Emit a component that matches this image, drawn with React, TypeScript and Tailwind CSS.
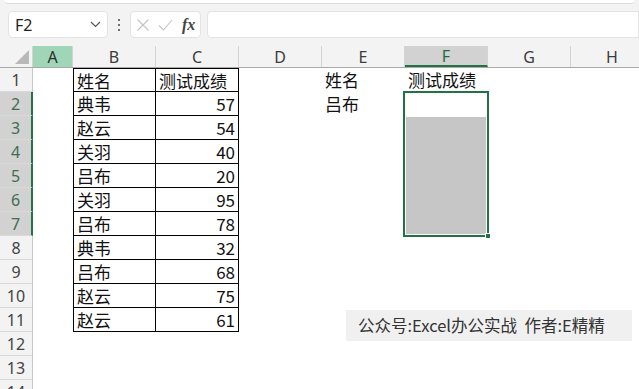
import React from 'react';

const COLS = ['A', 'B', 'C', 'D', 'E', 'F', 'G', 'H'];
const WIDTHS = [40, 83, 83, 83, 83, 83, 83, 83];

const data: [string, number][] = [
  ['典韦', 57],
  ['赵云', 54],
  ['关羽', 40],
  ['吕布', 20],
  ['关羽', 95],
  ['吕布', 78],
  ['典韦', 32],
  ['吕布', 68],
  ['赵云', 75],
  ['赵云', 61],
];

const cjk = { fontFamily: '"Noto Sans CJK SC", "Noto Sans", sans-serif' };

function Toolbar() {
  return (
    <div className="h-[46px] bg-[#f3f3f3] relative">
      <div className="h-[4px] bg-white border-b border-[#dcdcdc] rounded-b-[6px] mx-[4px]" />
      <div className="flex items-center h-[27px] mt-[7px] pl-[8px]">
        <div className="w-[100px] h-[27px] bg-white border border-[#e3e3e3] rounded-[4px] flex items-center justify-between pl-[6px] pr-[6px]">
          <span className="text-[16px] text-[#222]" style={{ fontFamily: '"Noto Sans", sans-serif' }}>F2</span>
          <svg width="11" height="7" viewBox="0 0 11 7" fill="none" stroke="#555" strokeWidth="1.2">
            <path d="M1 1l4.5 4.5L10 1" />
          </svg>
        </div>
        <div className="w-[22px] flex flex-col items-center gap-[3px]">
          <span className="w-[2px] h-[2px] bg-[#444] rounded-full" />
          <span className="w-[2px] h-[2px] bg-[#444] rounded-full" />
          <span className="w-[2px] h-[2px] bg-[#444] rounded-full" />
        </div>
        <div className="w-[71px] h-[27px] bg-white border border-[#e3e3e3] rounded-[4px] flex items-center pl-[5px] gap-[8px]">
          <svg width="14" height="14" viewBox="0 0 14 14" stroke="#c4c4c4" strokeWidth="1.1" fill="none">
            <path d="M1.5 1.5l11 11M12.5 1.5l-11 11" />
          </svg>
          <svg width="15" height="12" viewBox="0 0 15 12" stroke="#c4c4c4" strokeWidth="1.1" fill="none">
            <path d="M1 6.5l4.5 4.5L14 1" />
          </svg>
          <span className="italic text-[16px] text-[#444] font-semibold ml-[1px]" style={{ fontFamily: '"Liberation Serif", serif' }}>fx</span>
        </div>
        <div className="flex-1 h-[27px] bg-white border border-[#e3e3e3] rounded-l-[4px] ml-[6px]" />
      </div>
    </div>
  );
}

function HeaderRow() {
  return (
    <div className="flex h-[22px] bg-[#f3f3f3] border-b border-[#a9a9a9]">
      <div className="w-[33px] shrink-0 relative border-r border-[#d4d4d4]">
        <svg className="absolute left-[15px] top-[4px]" width="14" height="14" viewBox="0 0 14 14">
          <path d="M14 0V14H0Z" fill="#b9b9b9" />
        </svg>
      </div>
      {COLS.map((c, i) => {
        const isA = c === 'A';
        const isF = c === 'F';
        return (
          <div
            key={c}
            className={`shrink-0 flex items-center justify-center text-[16px] border-r border-[#d4d4d4] ${
              isA ? 'bg-[#a0d6b8] text-[#2d2d2d]' : isF ? 'bg-[#d2d2d2] text-[#1f6b43] border-b-2 border-b-[#217346]' : 'text-[#3c3c3c]'
            }`}
            style={{ width: WIDTHS[i], fontFamily: '"Noto Sans", sans-serif' }}
          >
            {c}
          </div>
        );
      })}
    </div>
  );
}

function RowHeader({ n }: { n: number }) {
  const sel = n >= 2 && n <= 7;
  return (
    <div
      className={`w-[33px] shrink-0 flex items-center justify-center text-[16px] border-b border-[#d9d9d9] ${
        sel ? 'bg-[#d2d2d2] text-[#3d6e50] border-r-2 border-r-[#217346]' : 'bg-[#f3f3f3] text-[#444] border-r border-r-[#c8c8c8]'
      }`}
      style={{ fontFamily: '"Noto Sans", sans-serif' }}
    >
      {n}
    </div>
  );
}

function Row({ n }: { n: number }) {
  const inTable = n >= 1 && n <= 11;
  const row = n >= 2 && n <= 11 ? data[n - 2] : null;
  const tb = inTable ? `border-b border-black ${n === 1 ? 'border-t' : ''}` : '';
  return (
    <div className="flex h-[24px] text-[17px] text-[#111]" style={cjk}>
      <RowHeader n={n} />
      <div className="w-[40px] shrink-0" />
      <div className={`w-[83px] shrink-0 pl-[3px] leading-[23px] ${inTable ? 'border-l border-r border-black' : ''} ${tb}`}>
        {n === 1 ? '姓名' : row ? row[0] : ''}
      </div>
      <div className={`w-[83px] shrink-0 pl-[3px] pr-[3px] leading-[23px] ${inTable ? 'border-r border-black' : ''} ${tb} ${n === 1 ? 'text-left' : 'text-right'}`}>
        {n === 1 ? '测试成绩' : row ? row[1] : ''}
      </div>
      <div className="w-[83px] shrink-0" />
      <div className="w-[83px] shrink-0 pl-[3px] leading-[23px]">
        {n === 1 ? '姓名' : n === 2 ? '吕布' : ''}
      </div>
      <div className="w-[83px] shrink-0 pl-[3px] leading-[23px]">
        {n === 1 ? '测试成绩' : ''}
      </div>
      <div className="w-[83px] shrink-0" />
      <div className="w-[83px] shrink-0" />
    </div>
  );
}

export default function App() {
  const rows = Array.from({ length: 14 }, (_, i) => i + 1);
  return (
    <div className="w-[639px] h-[389px] overflow-hidden bg-white relative">
      <Toolbar />
      <HeaderRow />
      <div>
        {rows.map((n) => (
          <Row key={n} n={n} />
        ))}
      </div>
      {/* selection rectangle F2:F7 with the shaded F3:F7 range */}
      <div className="absolute left-[403px] top-[91px] w-[86px] h-[146px] border-2 border-[#217346] p-[1px] pt-[24px] pointer-events-none">
        <div className="w-full h-full bg-[#c6c6c6]" />
      </div>
      <div className="absolute left-[485px] top-[233px] w-[6px] h-[6px] bg-[#217346] border border-white" />
      {/* floating text box */}
      <div
        className="absolute left-[346px] top-[310px] w-[286px] h-[31px] bg-[#f0f0f0] flex items-center pl-[12px] text-[16.5px] text-[#333] whitespace-pre"
        style={cjk}
      >
        公众号:Excel办公实战  作者:E精精
      </div>
    </div>
  );
}
